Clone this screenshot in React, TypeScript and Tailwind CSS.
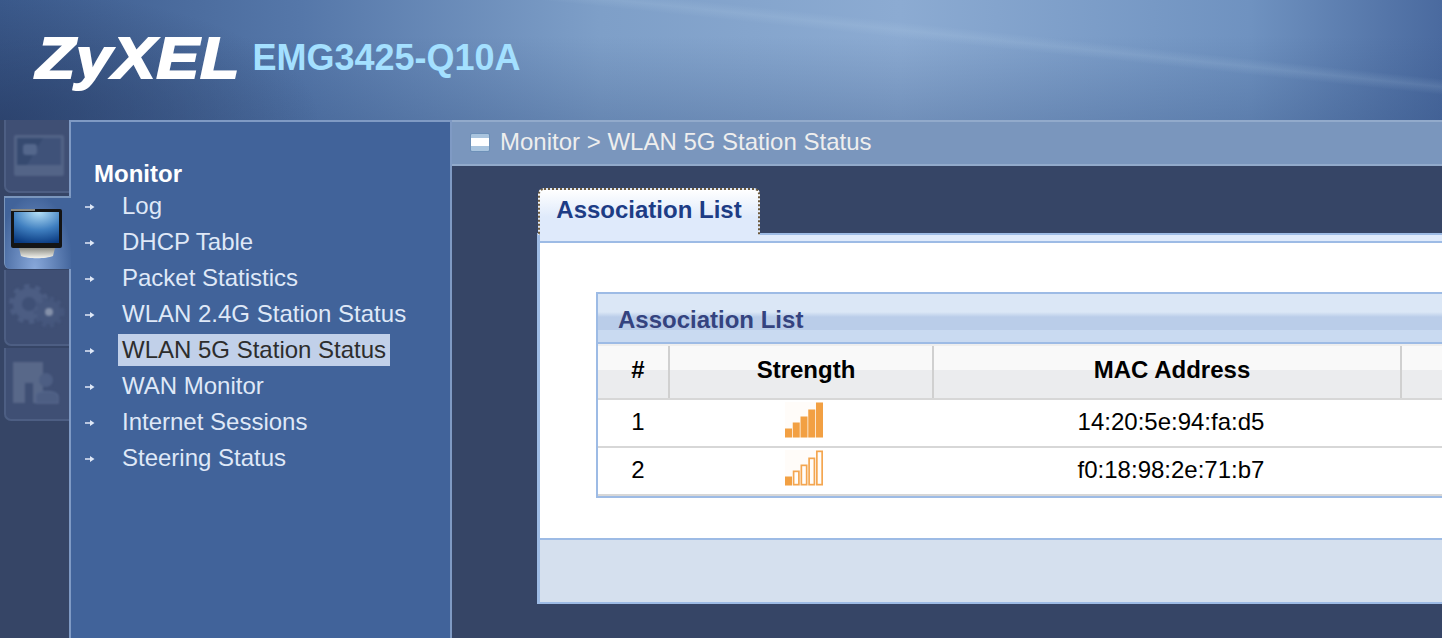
const menu = ["Log", "DHCP Table", "Packet Statistics", "WLAN 2.4G Station Status", "WLAN 5G Station Status", "WAN Monitor", "Internet Sessions", "Steering Status"];

function Signal({ level }: { level: number }) {
  const bars = [9, 15, 21, 28, 35];
  return (
    <svg width="38" height="36" viewBox="0 0 38 36" className="mb-[7px] mr-[6px]">
      <rect x="0" y="0" width="38" height="36" fill="#fffcf9" />
      {bars.map((h, i) =>
        i < level ? (
          <rect key={i} x={i * 7.75} y={35.5 - h} width="7" height={h} fill="#f2a043" />
        ) : (
          <rect key={i} x={i * 7.75 + 0.85} y={35.5 - h + 0.85} width="5.3" height={h - 1.7} fill="#fffdfa" stroke="#f4a650" strokeWidth="1.7" />
        )
      )}
    </svg>
  );
}

function Arrow() {
  return (
    <svg width="10" height="8" viewBox="0 0 10 8">
      <path d="M0 3.2H5V1L9.5 4 5 7V4.8H0Z" fill="#dfe8f7" />
    </svg>
  );
}

function MonitorDim() {
  return (
    <svg width="52" height="44" viewBox="0 0 52 44" className="blur-[1px]">
      <rect x="1" y="1" width="50" height="41" rx="2" fill="#536487" />
      <rect x="4" y="4" width="44" height="27" fill="#364a70" />
      <path d="M30 4H48V31H14Z" fill="#3f5279" />
      <rect x="10" y="10" width="14" height="11" rx="3" fill="#54678c" />
    </svg>
  );
}

function MonitorActive() {
  return (
    <svg width="54" height="52" viewBox="0 0 54 52">
      <defs>
        <radialGradient id="scr" cx="0.55" cy="0" r="1.05">
          <stop offset="0" stopColor="#b5e0f7" />
          <stop offset="0.55" stopColor="#3f7fc0" />
          <stop offset="1" stopColor="#0a3a80" />
        </radialGradient>
        <linearGradient id="stand" x1="0" y1="0" x2="0" y2="1">
          <stop offset="0" stopColor="#8c8c84" />
          <stop offset="1" stopColor="#f4f4ee" />
        </linearGradient>
      </defs>
      <path d="M9 40H45L43 48C36 51 18 51 11 48Z" fill="url(#stand)" />
      <rect x="1" y="1" width="51" height="39" rx="2" fill="#141414" />
      <rect x="1" y="1" width="24" height="2" fill="#8b8b84" />
      <rect x="4" y="4" width="45" height="31" fill="url(#scr)" />
    </svg>
  );
}

function Gears() {
  return (
    <svg width="60" height="50" viewBox="0 0 60 50" className="blur-[1px]">
      <circle cx="21" cy="22" r="16" fill="#4c5d83" />
      <circle cx="21" cy="22" r="17.5" fill="none" stroke="#4c5d83" strokeWidth="5" strokeDasharray="5.5 5.5" />
      <circle cx="21" cy="22" r="7" fill="#3f5076" />
      <circle cx="41" cy="30" r="12" fill="#46577d" />
      <circle cx="41" cy="30" r="13.5" fill="none" stroke="#46577d" strokeWidth="4" strokeDasharray="4 4" />
      <circle cx="41" cy="30" r="4" fill="#8591aa" />
    </svg>
  );
}

function Puzzle() {
  return (
    <svg width="56" height="50" viewBox="0 0 56 50" className="blur-[1px]">
      <path d="M3 3H33V44H23V24H15V44H3Z" fill="#586889" />
      <circle cx="36" cy="21" r="7" fill="#4d5e83" />
      <path d="M26 44V37C26 31 46 31 48 37V44Z" fill="#4d5e83" stroke="#55668b" strokeWidth="1.5" />
    </svg>
  );
}

export default function App() {
  return (
    <div className="w-[1442px] h-[638px] overflow-hidden flex flex-col bg-[#364566] font-['Liberation_Sans',Arial,sans-serif]">
      <header className="h-[120px] shrink-0 flex items-start bg-[linear-gradient(186deg,transparent_29%,rgba(190,215,235,0.15)_32%,transparent_35%),radial-gradient(ellipse_320px_130px_at_0px_120px,rgba(40,60,100,0.7),transparent),linear-gradient(180deg,transparent_30%,rgba(45,75,125,0.28)),linear-gradient(90deg,#3b5a8c_0px,#5577a9_300px,#7e9fc8_600px,#8cabd2_900px,#6f92c0_1250px,#4a6a9f_1442px)]">
        <div className="ml-[36px] mt-[23px] text-[57px] leading-[70px] font-bold italic text-white tracking-[1px] origin-left scale-x-[1.12] [-webkit-text-stroke:2px_white]">ZyXEL</div>
        <div className="ml-[34px] mt-[38px] text-[36px] leading-[40px] font-bold text-[#a4e0ff]">EMG3425-Q10A</div>
      </header>
      <div className="flex-1 flex min-h-0">
        <div className="w-[69px] shrink-0 flex flex-col">
          <div className="ml-[4px] w-[65px] h-[73px] rounded-bl-[7px] border-l-2 border-b-2 border-[#4d5e83] bg-[#3f4f74] flex items-center justify-center pl-[2px]">
            <MonitorDim />
          </div>
          <div className="relative z-10 mt-[3px] ml-[4px] w-[67px] h-[73px] rounded-bl-[6px] border-l border-t-2 border-[#7a96bd] bg-[radial-gradient(ellipse_at_45%_100%,#88a8da,#41639a_75%)] flex items-center justify-center pr-[2px]">
            <MonitorActive />
          </div>
          <div className="mt-[1px] ml-[4px] w-[65px] h-[76px] rounded-bl-[7px] border-l-2 border-b-2 border-[#4d5e83] bg-[#3f4f74] flex items-center justify-center">
            <Gears />
          </div>
          <div className="mt-[2px] ml-[4px] w-[65px] h-[73px] rounded-bl-[7px] border-l-2 border-b-2 border-[#4d5e83] bg-[#3f4f74] flex items-center justify-center">
            <Puzzle />
          </div>
        </div>
        <nav className="w-[383px] shrink-0 bg-[#41639a] border-l-2 border-t-2 border-r-2 border-[#7f9ac4] pt-[38px]">
          <div className="ml-[23px] text-[24px] leading-[28px] font-bold text-white">Monitor</div>
          <ul>
            {menu.map((m, i) => (
              <li key={m} className="h-[36px] flex items-center">
                <span className="ml-[14px] mt-[1px] w-[37px] flex shrink-0"><Arrow /></span>
                <span className={i === 4 ? "px-[4px] -ml-[4px] h-[32px] leading-[32px] text-[24px] bg-[#c1d0e9] text-[#2d2d2d]" : "text-[24px] text-[#dfe8f7]"}>{m}</span>
              </li>
            ))}
          </ul>
        </nav>
        <main className="flex-1 min-w-0 overflow-hidden">
          <div className="h-[46px] bg-[#7a96bd] border-y-2 border-[#92aacb] flex items-center pl-[18px] gap-[10px] pb-[2px]">
            <span className="w-[20px] h-[19px] rounded-[2px] border border-[#6d90b8] bg-[linear-gradient(#a9c4de_0_25%,#fff_25%_70%,#a9c4de_70%)]" />
            <span className="text-[24px] text-[#eeeeee]">Monitor &gt; WLAN 5G Station Status</span>
          </div>
          <div className="pl-[85px] pt-[22px] w-[1100px]">
            <div className="relative z-10 -mb-[2px] ml-[1px] w-[222px] h-[47px] rounded-t-[6px] border-t-2 border-x-2 border-dotted border-[#6d5a3c] bg-[linear-gradient(#ffffff,#dfeafb_60%)] flex items-center justify-center pb-[6px] text-[24px] font-bold text-[#1d3c85]">Association List</div>
            <div className="h-[371px] border-l-[3px] border-y-2 border-[#9dbbe5] bg-white flex flex-col">
              <div className="h-[8px] shrink-0 bg-[#dfeafb] border-b-2 border-[#9dbbe5]" />
              <div className="flex-1 pl-[56px] pt-[49px]">
                <div className="border-l-2 border-y-2 border-[#9dbbe5]">
                  <div className="h-[50px] flex items-center pl-[20px] pt-[3px] text-[24px] font-bold text-[#34437f] border-b-2 border-[#9dbbe5] bg-[linear-gradient(#dbe7f6_0_18px,#bacde9_23px_36px,#c9daf1_36px)]">Association List</div>
                  <div className="flex h-[56px] border-b-2 border-[#d7d7d7] bg-[linear-gradient(#eeeeee_0_2px,#f9f9f9_2px_26px,#ebecee_26px)] text-[24px] font-bold text-black">
                    <div className="w-[72px] mt-[2px] border-r-2 border-[#d0d0d0] flex items-center justify-center pl-[10px] pb-[4px]">#</div>
                    <div className="w-[264px] mt-[2px] border-r-2 border-[#d0d0d0] flex items-center justify-center pl-[10px] pb-[4px]">Strength</div>
                    <div className="w-[468px] mt-[2px] border-r-2 border-[#d0d0d0] flex items-center justify-center pl-[10px] pb-[4px]">MAC Address</div>
                  </div>
                  {[["1", 5, "14:20:5e:94:fa:d5"], ["2", 1, "f0:18:98:2e:71:b7"]].map(([n, l, mac]) => (
                    <div key={n as string} className="flex h-[48px] border-b-2 border-[#d7d7d7] bg-white text-[24px] text-black">
                      <div className="w-[72px] flex items-center justify-center pl-[8px] pb-[2px]">{n}</div>
                      <div className="w-[264px] flex items-center justify-center pl-[10px]"><Signal level={l as number} /></div>
                      <div className="w-[468px] flex items-center justify-center pl-[6px] pb-[2px]">{mac}</div>
                    </div>
                  ))}
                </div>
              </div>
              <div className="h-[64px] shrink-0 border-t-2 border-[#9dbbe5] bg-[#d5e0ee]" />
            </div>
          </div>
        </main>
      </div>
    </div>
  );
}
